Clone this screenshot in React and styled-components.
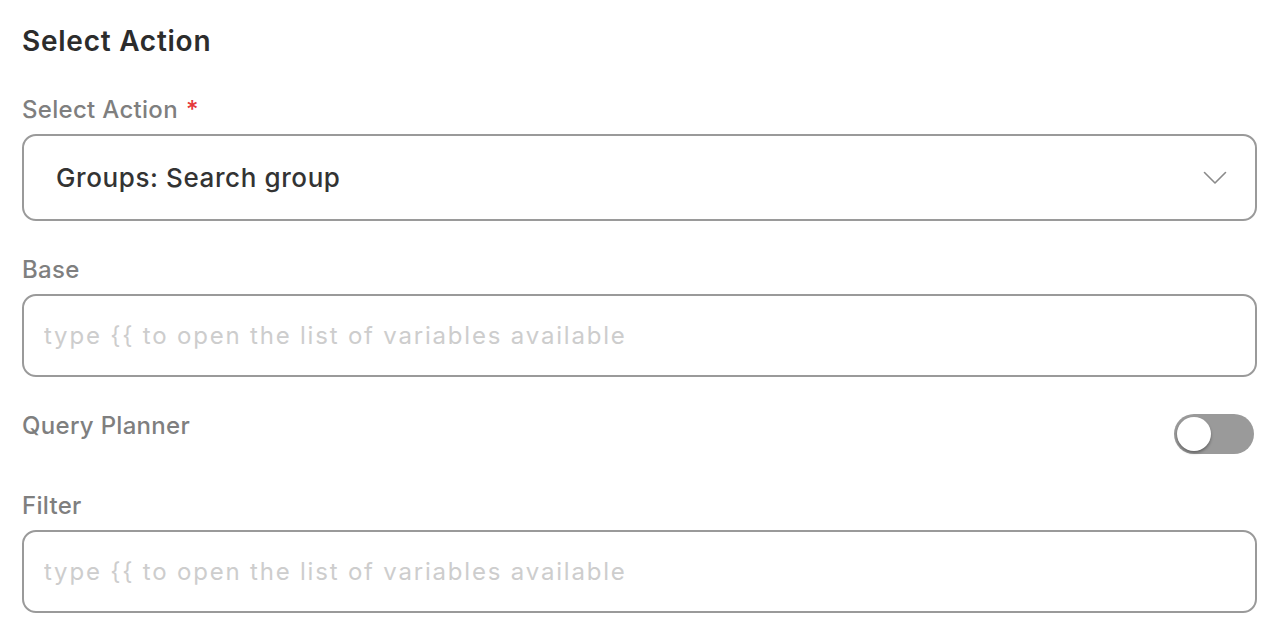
import React, { useState } from "react";
import styled, { createGlobalStyle } from "styled-components";

const Global = createGlobalStyle`
  html, body { margin: 0; padding: 0; background: #ffffff; }
  body { font-family: "Inter", "Open Sans", sans-serif; -webkit-font-smoothing: antialiased; }
  * { box-sizing: border-box; }
`;

const Panel = styled.div`
  width: 1286px;
  height: 642px;
  padding: 24px 29px 0 22px;
  display: flex;
  flex-direction: column;
  background: #fff;
  overflow: hidden;
`;

const Title = styled.h2`
  margin: 0 0 38px;
  font-size: 28px;
  line-height: 34px;
  font-weight: 600;
  letter-spacing: 0.75px;
  color: #2c2c2c;
`;

const Field = styled.div`
  display: flex;
  flex-direction: column;
  margin-bottom: 35px;
`;

const Label = styled.label`
  display: block;
  font-size: 24px;
  line-height: 28px;
  font-weight: 500;
  letter-spacing: 0.3px;
  color: #7f7f7f;
  margin-bottom: 10px;
`;

const Required = styled.span`
  color: #e5383b;
  margin-left: 8px;
`;

const SelectBox = styled.div`
  height: 87px;
  border: 2px solid #9a9a9a;
  border-radius: 14px;
  display: flex;
  align-items: center;
  justify-content: space-between;
  padding: 0 28px 0 32px;
  font-size: 26px;
  font-weight: 500;
  letter-spacing: 0.6px;
  color: #333;
`;

const Input = styled.input`
  height: 83px;
  width: 100%;
  border: 2px solid #9a9a9a;
  border-radius: 14px;
  padding: 0 20px;
  font-family: inherit;
  font-size: 24px;
  letter-spacing: 1.8px;
  color: #333;
  outline: none;
  background: #fff;
  &::placeholder { color: #cdcdcd; }
`;

const ToggleRow = styled.div`
  display: flex;
  justify-content: space-between;
  align-items: flex-start;
  height: 45px;
  margin-bottom: 38px;
`;

const ToggleLabel = styled(Label)`
  margin: 0;
`;

const Switch = styled.button`
  position: relative;
  width: 80px;
  height: 40px;
  margin: 2px 3px 0 0;
  border: none;
  padding: 0;
  border-radius: 20px;
  background: ${(p) => (p.$on ? "#4a7cf7" : "#9a9a9a")};
  cursor: pointer;
`;

const Knob = styled.span`
  position: absolute;
  top: 3px;
  left: ${(p) => (p.$on ? 44 : 3)}px;
  width: 34px;
  height: 34px;
  border-radius: 50%;
  background: #fff;
  box-shadow: 0 2px 3px rgba(0, 0, 0, 0.35);
`;

const Chevron = () => (
  <svg width="24" height="14" viewBox="0 0 24 14" fill="none">
    <path d="M1.5 1.5 L12 12 L22.5 1.5" stroke="#8a8a8a" strokeWidth="1.6" strokeLinecap="round" strokeLinejoin="round" />
  </svg>
);

const PH = "type {{ to open the list of variables available";

export default function App() {
  const [on, setOn] = useState(false);
  return (
    <>
      <Global />
      <Panel>
        <Title>Select Action</Title>
        <Field>
          <Label>
            Select Action<Required>*</Required>
          </Label>
          <SelectBox>
            <span>Groups: Search group</span>
            <Chevron />
          </SelectBox>
        </Field>
        <Field>
          <Label>Base</Label>
          <Input placeholder={PH} />
        </Field>
        <ToggleRow>
          <ToggleLabel>Query Planner</ToggleLabel>
          <Switch $on={on} onClick={() => setOn(!on)} aria-label="Query Planner">
            <Knob $on={on} />
          </Switch>
        </ToggleRow>
        <Field>
          <Label>Filter</Label>
          <Input placeholder={PH} />
        </Field>
      </Panel>
    </>
  );
}
